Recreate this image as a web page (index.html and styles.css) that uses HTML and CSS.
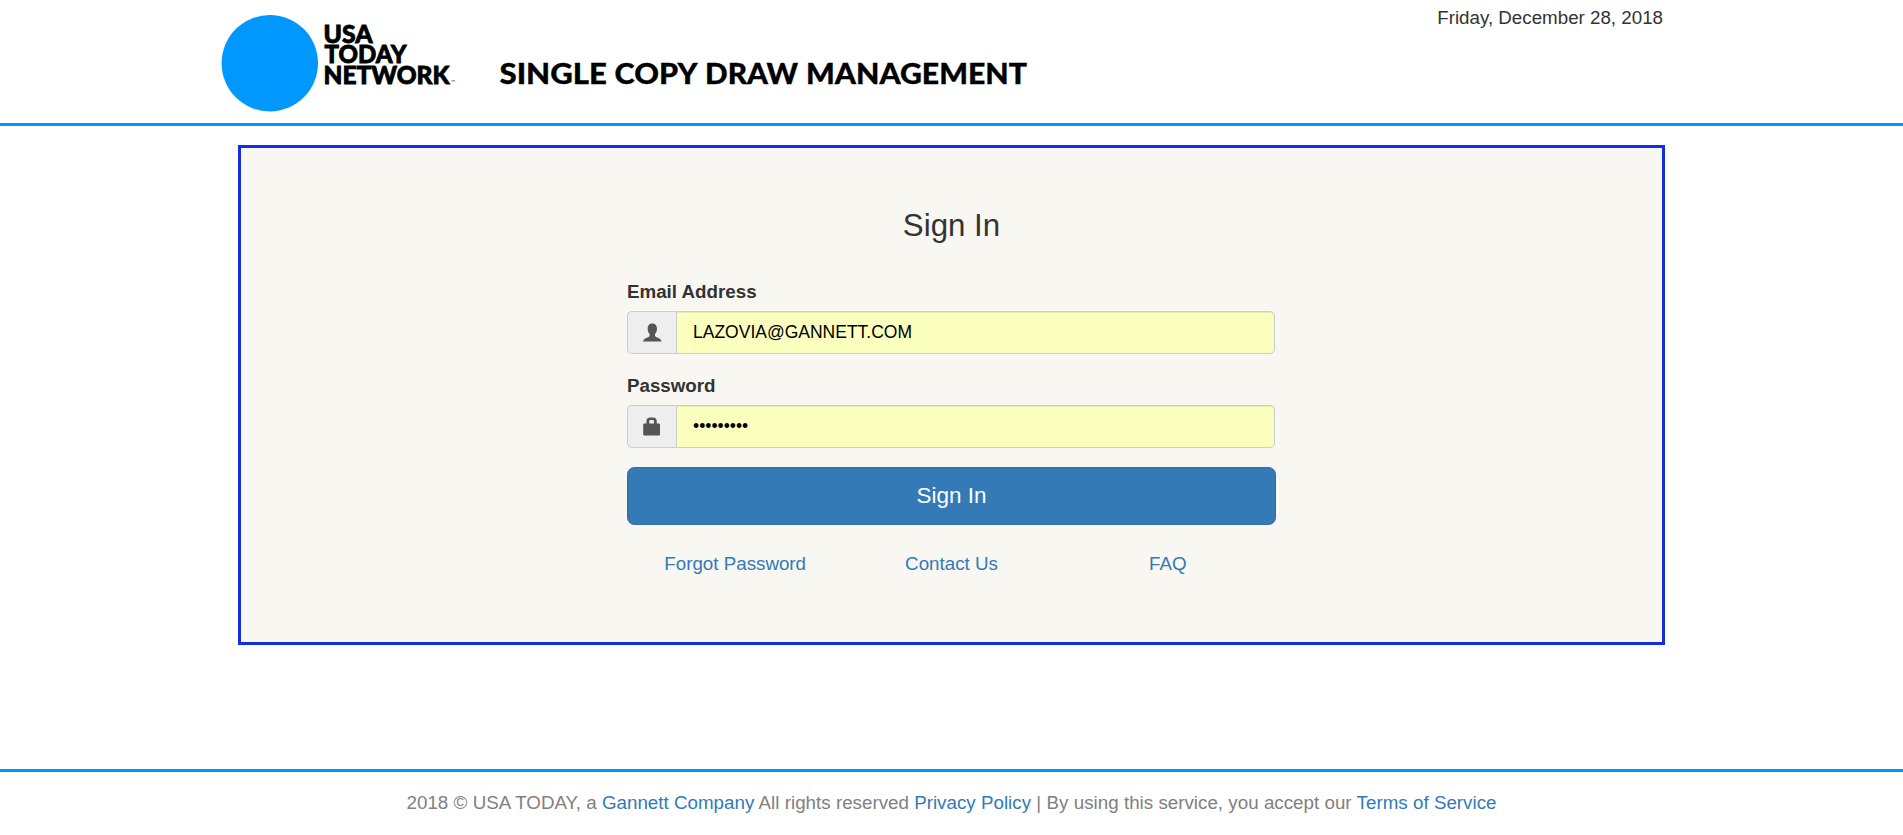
FILE: index.html
```html
<!DOCTYPE html>
<html lang="en">
<head>
<meta charset="utf-8">
<title>Single Copy Draw Management</title>
<link rel="stylesheet" href="styles.css">
</head>
<body>
<header class="header">
  <div class="header-inner">
    <svg class="brand" width="820" height="118" viewBox="0 0 820 118" role="img" aria-label="USA Today Network">
      <circle class="brand-dot" cx="49.8" cy="63.2" r="48.2"/>
      <g class="brand-name">
        <text x="103.5" y="42.5" textLength="49" lengthAdjust="spacingAndGlyphs">USA</text>
        <text x="104.5" y="63.3" textLength="82" lengthAdjust="spacingAndGlyphs">TODAY</text>
        <text x="103.5" y="84" textLength="126" lengthAdjust="spacingAndGlyphs">NETWORK</text>
      </g>
      <text class="brand-tm" x="230.5" y="84">™</text>
      <g class="brand-title">
        <text x="279.5" y="83.8" textLength="107.5" lengthAdjust="spacingAndGlyphs">SINGLE</text>
        <text x="394.5" y="83.8" textLength="83" lengthAdjust="spacingAndGlyphs">COPY</text>
        <text x="485" y="83.8" textLength="93" lengthAdjust="spacingAndGlyphs">DRAW</text>
        <text x="586" y="83.8" textLength="221" lengthAdjust="spacingAndGlyphs">MANAGEMENT</text>
      </g>
    </svg>
    <div class="date">Friday, December 28, 2018</div>
  </div>
</header>
<main class="panel">
  <form class="signin">
    <h1 class="heading">Sign In</h1>
    <label class="label" for="email">Email Address</label>
    <div class="group">
      <span class="addon">
        <svg width="20" height="20" viewBox="0 0 20 20"><path d="M10.3 .6C7.2.6 5.6 2.7 5.6 5.5C5.6 8 6.4 9.8 7.6 11V12.4C7.6 13.3 7 13.8 5.5 14.4C3 15.3 1.3 16.2 1 18.6H19.6C19.3 16.2 17.6 15.3 15.1 14.4C13.6 13.8 13 13.3 13 12.4V11C14.2 9.8 15 8 15 5.5C15 2.7 13.4.6 10.3.6Z"/></svg>
      </span>
      <input class="input" id="email" type="text" value="LAZOVIA@GANNETT.COM">
    </div>
    <label class="label" for="password">Password</label>
    <div class="group">
      <span class="addon">
        <svg width="20" height="20" viewBox="0 0 20 20"><path fill-rule="evenodd" d="M4.4 6.4V4.4Q4.4.4 8.2.4H11Q14.8.4 14.8 4.4V6.4H16.7Q18 6.4 18 7.6V17.2Q18 18.4 16.7 18.4H2.4Q1.2 18.4 1.2 17.2V7.6Q1.2 6.4 2.4 6.4ZM7.2 6.4H12V4.4Q12 3 10.7 3H8.5Q7.2 3 7.2 4.4Z"/></svg>
      </span>
      <input class="input" id="password" type="password" value="123456789">
    </div>
    <button class="button" type="button">Sign In</button>
    <nav class="links">
      <a href="#">Forgot Password</a>
      <a href="#">Contact Us</a>
      <a href="#">FAQ</a>
    </nav>
  </form>
</main>
<footer class="footer">2018 © USA TODAY, a <a href="#">Gannett Company</a> All rights reserved <a href="#">Privacy Policy</a> | By using this service, you accept our <a href="#">Terms of Service</a></footer>
</body>
</html>
```
FILE: styles.css
```css
* { box-sizing: border-box; }
body {
  margin: 0;
  height: 835px;
  overflow: hidden;
  display: flex;
  flex-direction: column;
  background: #fff;
  color: #333;
  font: 18.75px/26.8px "Liberation Sans", Arial, sans-serif;
}
a { color: #337ab7; text-decoration: none; }
.header { height: 126px; border-bottom: 3px solid #0098fe; }
.header-inner {
  width: 1443px;
  margin-left: 220px;
  display: flex;
  justify-content: space-between;
}
.brand { display: block; }
.brand-dot { fill: #0098ff; }
.brand-name { font: 900 24px Lato, sans-serif; stroke: #000; stroke-width: .8px; }
.brand-tm { font: 6px Lato, sans-serif; fill: #555; }
.brand-title { font: 900 28px Lato, sans-serif; stroke: #000; stroke-width: .3px; }
.date { padding-top: 5px; white-space: nowrap; }
.panel {
  width: 1427px;
  height: 500px;
  margin: 19px 0 0 238px;
  background: #f8f7f2;
  border: 3px solid #132ee4;
  display: flex;
  justify-content: center;
}
.signin {
  width: 649px;
  padding-top: 60px;
  display: flex;
  flex-direction: column;
}
.heading {
  margin: 0 0 34px;
  font-size: 31.25px;
  font-weight: 400;
  line-height: 36px;
  text-align: center;
}
.label { font-weight: 700; line-height: 27px; margin-bottom: 6px; }
.group { display: flex; width: 648px; height: 43px; margin-bottom: 18px; }
.addon {
  width: 49px;
  display: flex;
  align-items: center;
  justify-content: center;
  background: #eee;
  border: 1px solid #ccc;
  border-right: 0;
  border-radius: 5px 0 0 5px;
}
.addon svg { fill: #555; }
.input {
  flex: 1;
  min-width: 0;
  padding: 0 16px;
  background: #faffbd;
  border: 1px solid #ccc;
  border-radius: 0 5px 5px 0;
  box-shadow: inset 0 1px 1px rgba(0, 0, 0, .075);
  color: #000;
  font: 17.5px "Liberation Sans", Arial, sans-serif;
  outline: 0;
}
.button {
  height: 58px;
  margin-top: 1px;
  padding: 0;
  background: #337ab7;
  border: 1px solid #2e6da4;
  border-radius: 7.5px;
  color: #fff;
  font: 22.5px "Liberation Sans", Arial, sans-serif;
}
.links {
  margin-top: 26px;
  display: grid;
  grid-template-columns: repeat(3, 1fr);
  text-align: center;
}
.footer {
  margin-top: 124px;
  padding-top: 18px;
  border-top: 3px solid #0098fe;
  color: #808080;
  text-align: center;
  word-spacing: .12px;
}
```
